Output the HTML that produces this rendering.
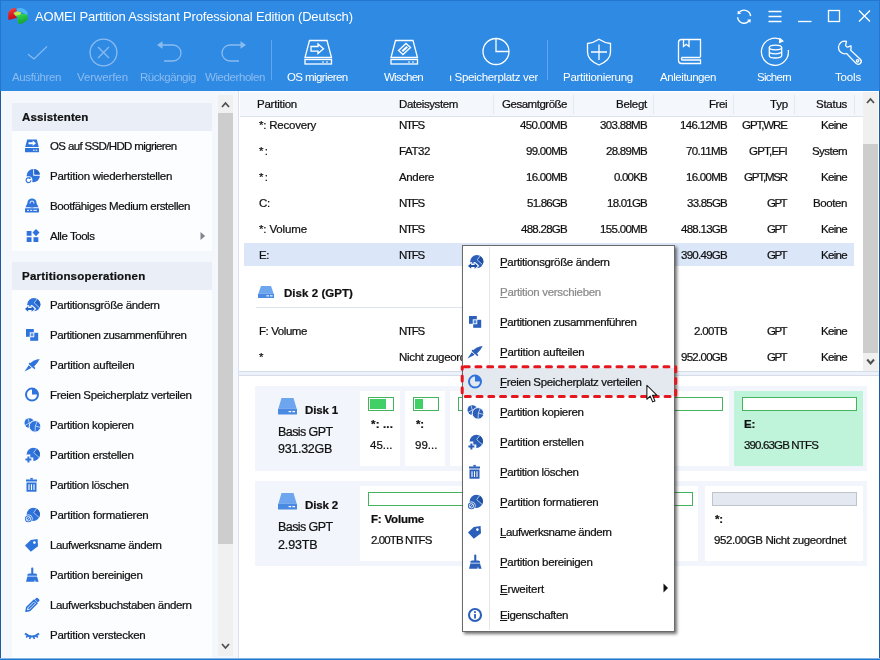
<!DOCTYPE html>
<html lang="de"><head><meta charset="utf-8"><title>AOMEI Partition Assistant Professional Edition (Deutsch)</title>
<style>
*{box-sizing:border-box;margin:0;padding:0}
html,body{width:880px;height:660px;overflow:hidden;background:#fff}
body{position:relative;font-family:"Liberation Sans",sans-serif;font-size:11.5px;letter-spacing:-0.23px;color:#101010}
.a,.t{position:absolute;white-space:nowrap}
.t{line-height:14px;height:14px;will-change:transform;-webkit-text-stroke:0.22px currentColor}
svg{position:absolute;overflow:visible}
u{text-decoration:underline;text-underline-offset:1px}
.blk{position:absolute;background:#fff}
.bar{position:absolute;border:1px solid #45b35c;background:#fff;height:14px}
.bar i{position:absolute;left:1px;top:1px;bottom:1px;background:#40d066}
</style></head><body>
<!-- ===== HEADER ===== -->
<div class="a" style="left:0;top:0;width:880px;height:91px;background:#2f8ae4"></div>
<div class="a" style="left:0;top:0;width:880px;height:1px;background:#2277cf"></div>
<svg style="left:0;top:0" width="880" height="91" viewBox="0 0 880 91" fill="none" stroke-linecap="butt">
<!-- logo -->
<defs><linearGradient id="lr" x1="0" y1="0" x2="0.3" y2="1"><stop offset="0" stop-color="#f4584e"/><stop offset="0.55" stop-color="#e01c22"/><stop offset="1" stop-color="#c80e18"/></linearGradient>
<linearGradient id="lg" x1="0" y1="0" x2="0.4" y2="1"><stop offset="0" stop-color="#34e45c"/><stop offset="1" stop-color="#16a430"/></linearGradient></defs>
<g stroke="none">
<path d="M16.4,8.800 Q23,6.200 27.300,12 L27.700,15.800 L24,13.600 Q21,10.700 17.300,11.400 Z" fill="#4cb6f6"/>
<path d="M8.300,12.200 L11.500,8.400 L15.900,8 L16.700,10.800 L13.300,13 L15.400,15.400 L17.100,17.700 L9,19.900 L8.200,18.500 Z" fill="url(#lr)"/>
<path d="M17.400,17.200 L15.600,15.600 L20,14.600 L24,13.400 L27.700,15.600 L27.600,19.500 Q23,24.600 18,23.500 Z" fill="url(#lg)"/>
<path d="M13.300,13 L17.300,11.300 L21.500,12.200 L20.300,14.800 L15.600,15.700 Z" fill="#c2e648"/>
</g>
<!-- disabled icons -->
<g stroke="#8bbcf0" stroke-width="1.3">
<path d="M28,54.2 L34,59 L47,46.4"/>
<circle cx="103.5" cy="52.5" r="13.4"/><path d="M98,47 L109,58 M109,47 L98,58"/>
<path d="M160,45 H173 a8,8 0 0 1 0,16 H164"/><path d="M162.5,41.2 L157,45 L162.5,48.8Z" fill="#8bbcf0" stroke="none"/>
<path d="M243,45 H230 a8,8 0 0 0 0,16 H239"/><path d="M240.5,41.2 L246,45 L240.5,48.8Z" fill="#8bbcf0" stroke="none"/>
</g>
<g stroke="#fff" stroke-width="1.3">
<!-- OS migrieren -->
<path d="M309.5,40.5 H327 L331.5,57.5 H305Z"/><rect x="305" y="59.5" width="26.5" height="4.5"/><path d="M322,62 h2 M326,62 h2" stroke-width="1"/>
<path d="M311,46.5 h7 v-2.5 l5.5,4.8 -5.5,4.8 v-2.5 h-7z"/>
<!-- Wischen -->
<path d="M395.500,40.5 H413 L417.5,57.500 H391Z"/><rect x="391" y="59.5" width="26.500" height="4.5"/><path d="M408,62 h2 M412,62 h2" stroke-width="1"/>
<path d="M398.500,50.500 L406,43.500 L410.500,47.500 L403,54.500Z"/><path d="M401.500,50.500 L406.500,46 L408,47.500 L403,52Z" fill="#fff" stroke="none"/>
<!-- pie -->
<circle cx="496" cy="51.500" r="13"/><path d="M496,38.500 V51.500 H509"/>
<!-- shield -->
<path d="M599,39.300 C603,42 607,43.200 610.500,43.500 V52 C610.500,58 605,62.500 599,65 C593,62.500 587.500,58 587.500,52 V43.500 C591,43.200 595,42 599,39.300Z"/><path d="M599,44.500 V60 M591,52 H607"/>
<!-- book -->
<path d="M700.500,57 V39.500 H681.500 Q678.500,39.500 678.500,42.500 V60.500 Q678.500,63.500 681.500,63.500 H700.500 V60 H682 Q680.800,59 682,57.500 H700.500"/><path d="M683.500,39.500 V46.500 L686.200,44.300 L689,46.500 V39.500"/>
<!-- backup -->
<path d="M781.500,40 A13.500,13.500 0 1 0 788.300,50"/><path d="M779.500,37.500 L784,41.200 L778.800,43.500Z" fill="#fff" stroke="none"/>
<ellipse cx="775.500" cy="47.500" rx="6.200" ry="2.300"/><path d="M769.300,47.500 V55.700 A6.200,2.300 0 0 0 781.700,55.700 V47.500 M769.300,51.600 A6.200,2.300 0 0 0 781.700,51.600"/>
<!-- wrench -->
<path d="M846.4,41.4 L845.6,45.4 A2.4,2.4 0 0 0 847.6,47.2 L850.9,45.9 A6.3,6.3 0 0 1 850.6,50.2 L860.3,59.2 A3,3 0 0 1 856,63.4 L846.6,53.5 A6.3,6.3 0 1 1 846.4,41.4 Z"/><circle cx="857.600" cy="60.800" r="1.200"/>
<!-- window controls -->
<path d="M739.500,12.100 A6.500,6.500 0 0 1 750.600,16.100 M748.700,21.300 A6.500,6.500 0 0 1 737.600,17.300" stroke-width="1.400"/><path d="M737.400,14.200 L737.900,10.500 L741.100,13.700Z M750.800,19.200 L750.300,22.900 L747.100,19.700Z" fill="#fff" stroke="none"/>
<path d="M768.500,11.500 H781.500 M768.500,16.500 H781.500 M768.500,21.500 H781.500"/>
<path d="M798,21.500 H811.500"/>
<rect x="828.5" y="10.500" width="11" height="11"/>
<path d="M859,10.500 L870,21.500 M870,10.500 L859,21.500"/>
</g>
</svg>

<div class="a" style="left:449.5px;top:70px;width:88.5px;height:14px;overflow:hidden"><div class="t" style="right:0;top:0;color:#fff;letter-spacing:-0.32px;-webkit-text-stroke:0">Freien Speicherplatz ver</div></div>
<div class="t" style="top:10px;left:35px;font-size:13px;letter-spacing:-0.17px;color:#fff;-webkit-text-stroke:0;">AOMEI Partition Assistant Professional Edition (Deutsch)</div>
<div class="t" style="top:70px;left:12px;letter-spacing:-0.38px;color:#8bbcf0;-webkit-text-stroke:0;">Ausführen</div>
<div class="t" style="top:70px;left:77px;letter-spacing:-0.09px;color:#8bbcf0;-webkit-text-stroke:0;">Verwerfen</div>
<div class="t" style="top:70px;left:140px;letter-spacing:-0.47px;color:#8bbcf0;-webkit-text-stroke:0;">Rückgängig</div>
<div class="t" style="top:70px;left:205px;letter-spacing:-0.42px;color:#8bbcf0;-webkit-text-stroke:0;">Wiederholen</div>
<div class="t" style="top:70px;left:287px;letter-spacing:-0.6px;color:#fff;-webkit-text-stroke:0;">OS migrieren</div>
<div class="t" style="top:70px;left:384px;letter-spacing:-0.73px;color:#fff;-webkit-text-stroke:0;">Wischen</div>
<div class="t" style="top:70px;left:562.5px;letter-spacing:-0.28px;color:#fff;-webkit-text-stroke:0;">Partitionierung</div>
<div class="t" style="top:70px;left:660px;letter-spacing:-0.43px;color:#fff;-webkit-text-stroke:0;">Anleitungen</div>
<div class="t" style="top:70px;left:757px;letter-spacing:-0.71px;color:#fff;-webkit-text-stroke:0;">Sichern</div>
<div class="t" style="top:70px;left:835px;letter-spacing:-0.17px;color:#fff;-webkit-text-stroke:0;">Tools</div>
<div class="a" style="left:271px;top:40px;width:1px;height:40px;background:#62a7ee"></div>
<div class="a" style="left:546.5px;top:40px;width:1px;height:40px;background:#62a7ee"></div>

<!-- ===== SIDEBAR ===== -->
<div class="a" style="left:1px;top:91px;width:238px;height:567px;background:#f4f7fc"></div>
<div class="a" style="left:12px;top:103px;width:200px;height:28px;background:#e9eef7"></div>
<div class="a" style="left:12px;top:131px;width:200px;height:120px;background:#fcfdfe"></div>
<div class="a" style="left:12px;top:262px;width:200px;height:28px;background:#e9eef7"></div>
<div class="a" style="left:12px;top:290px;width:200px;height:368px;background:#fcfdfe"></div>
<div class="a" style="left:218px;top:95px;width:15px;height:561px;background:#f0f0f0"></div>
<div class="a" style="left:218px;top:113px;width:15px;height:431px;background:#cdcdcd"></div>
<svg style="left:218px;top:95px" width="15" height="18"><path d="M4,12 L7.5,8 L11,12" fill="none" stroke="#505050" stroke-width="1.8"/></svg>
<svg style="left:218px;top:638px" width="15" height="18"><path d="M4,6 L7.5,10 L11,6" fill="none" stroke="#505050" stroke-width="1.8"/></svg>
<div class="a" style="left:238px;top:91px;width:1px;height:567px;background:#dbe1ec"></div>
<svg style="left:199.5px;top:230px" width="6" height="12"><path d="M0.5,2 L5.2,6 L0.5,10Z" fill="#80868f"/></svg>
<svg style="left:23.5px;top:138px" width="16" height="16" viewBox="0 0 16 16"><path d="M3.2,1.5 H12.8 L14.8,9 H1.2 Z" fill="#2f74dc"/><path d="M4.5,4.3 h4.2 v-1.8 l3.3,2.8 -3.3,2.8 v-1.8 h-4.2z" fill="#fff"/><rect x="1" y="10" width="14" height="4.3" rx=".6" fill="#2f74dc"/><rect x="9" y="11.7" width="1.6" height="1" fill="#fff"/><rect x="11.6" y="11.7" width="1.6" height="1" fill="#fff"/></svg>
<svg style="left:23.5px;top:168px" width="16" height="16" viewBox="0 0 16 16"><circle cx="9.3" cy="7.6" r="6.6" fill="#2f74dc"/><path d="M9.8,1.2 V7.100 H16" stroke="#fff" stroke-width="1.1" fill="none"/><path d="M10.4,0.900 A6.7,6.7 0 0 1 16,6.500 H10.4Z" fill="#2563c4"/><circle cx="4.5" cy="12.2" r="3.9" fill="#fff"/><path d="M6.900,12.300 a2.400,2.400 0 1 1 -1,-2" stroke="#2f74dc" stroke-width="1.2" fill="none"/><path d="M5.300,8.700 l2.100,1.500 -2.300,1z" fill="#2f74dc"/></svg>
<svg style="left:23.5px;top:198px" width="16" height="16" viewBox="0 0 16 16"><circle cx="8" cy="5" r="4.6" fill="#2f74dc"/><circle cx="8" cy="5" r="2" fill="none" stroke="#fff" stroke-width=".9"/><path d="M3.4,5.5 H12.6 L14.6,9.3 H1.4 Z" fill="#2f74dc"/><circle cx="8" cy="5" r="1" fill="#2f74dc"/><rect x="1" y="10.2" width="14" height="4.2" rx=".6" fill="#2f74dc"/><rect x="3" y="11.8" width="2" height="1" fill="#fff"/><rect x="6.2" y="11.8" width="2" height="1" fill="#fff"/><rect x="9.4" y="11.8" width="3.4" height="1" fill="#fff"/></svg>
<svg style="left:23.5px;top:228px" width="16" height="16" viewBox="0 0 16 16"><rect x="2.7" y="3" width="4.8" height="4.8" fill="#2f74dc"/><rect x="2.7" y="9.200" width="4.8" height="4.800" fill="#2f74dc"/><rect x="9.500" y="9.200" width="4.800" height="4.800" fill="#2f74dc"/><path d="M12,1 L15.500,4.600 12,8.200 8.500,4.600Z" fill="#2f74dc"/></svg>
<svg style="left:23.5px;top:297px" width="16" height="16" viewBox="0 0 16 16"><circle cx="9.8" cy="7.6" r="6.6" fill="#2f74dc"/><path d="M10.2,5.9 L13.2,1.9 A6.6,6.6 0 0 1 15.6,10.7Z" fill="#2563c4"/><path d="M13.2,1.9 L10.2,5.9 L15.6,10.7" stroke="#a9c8f3" stroke-width="1" fill="none"/><path d="M1,11.9 l3.2,-2.8 v1.8 h3.4 v-1.8 l3.2,2.8 -3.200,2.8 v-1.8 h-3.4 v1.8z" fill="#2563c4" stroke="#fff" stroke-width="2.2" paint-order="stroke" stroke-linejoin="round"/></svg>
<svg style="left:23.5px;top:327px" width="16" height="16" viewBox="0 0 16 16"><rect x="2" y="2" width="7.8" height="7.8" fill="#2f74dc"/><rect x="6.2" y="5.8" width="8" height="8" fill="#2f74dc"/><rect x="6.2" y="5.8" width="3.6" height="4" fill="#5b95ea" stroke="#fff" stroke-width=".9"/></svg>
<svg style="left:23.5px;top:357px" width="16" height="16" viewBox="0 0 16 16"><path d="M0.5,14.4 L5.6,7 Q9.5,2.6 15.7,2 Q13.6,6.4 9.8,9.8 Z" fill="#2f74dc"/><path d="M5.1,6.1 L10.9,11.6" stroke="#2f74dc" stroke-width="1.6"/><path d="M4.3,7.2 L9.6,12.3" stroke="#fff" stroke-width="1"/></svg>
<svg style="left:23.5px;top:387px" width="16" height="16" viewBox="0 0 16 16"><circle cx="8" cy="7.6" r="6" fill="none" stroke="#2f74dc" stroke-width="2"/><path d="M8,7.6 V1.2 A6.4,6.4 0 0 1 14.4,7.6Z" fill="#2f74dc"/></svg>
<svg style="left:23.5px;top:417px" width="16" height="16" viewBox="0 0 16 16"><circle cx="5.3" cy="6" r="4.8" fill="#2f74dc"/><path d="M5.3,6 L4,1.4 M5.3,6 L1,8.4 M5.3,6 L9.8,4.4" stroke="#fff" stroke-width=".8" opacity=".8"/><circle cx="11" cy="9.4" r="5.8" fill="#2f74dc" stroke="#fff" stroke-width="1"/><path d="M11.4,9 L13.2,4.4 M11.4,9 L16.2,10.4 M11.4,9 L11,14.6" stroke="#fff" stroke-width=".8" opacity=".8"/></svg>
<svg style="left:23.5px;top:447px" width="16" height="16" viewBox="0 0 16 16"><circle cx="9.3" cy="7.3" r="6.6" fill="#2f74dc"/><path d="M9.7,5.6 L12.7,1.6 A6.6,6.6 0 0 1 15.1,10.4Z" fill="#2563c4"/><path d="M12.7,1.6 L9.7,5.6 L15.1,10.4" stroke="#a9c8f3" stroke-width="1" fill="none"/><path d="M4.4,9.4 v6 M1.4,12.4 h6" stroke="#fff" stroke-width="3.8" stroke-linecap="square"/><path d="M4.4,9.4 v6 M1.4,12.4 h6" stroke="#2f74dc" stroke-width="2"/></svg>
<svg style="left:23.5px;top:477px" width="16" height="16" viewBox="0 0 16 16"><rect x="6.4" y="0.9" width="2.4" height="1.8" fill="#2f74dc"/><rect x="2" y="2.5" width="11" height="2" fill="#2f74dc"/><path d="M2.5,5.5 H12.5 V14.7 H2.5Z" fill="#2f74dc"/><path d="M5,7.2 v5.8 M7.5,7.2 v5.8 M10,7.2 v5.8" stroke="#fff" stroke-width="1.1"/></svg>
<svg style="left:23.5px;top:507px" width="16" height="16" viewBox="0 0 16 16"><circle cx="9.3" cy="7.3" r="6.6" fill="#2f74dc"/><path d="M9.7,5.6 L12.7,1.6 A6.6,6.6 0 0 1 15.1,10.4Z" fill="#2563c4"/><path d="M12.7,1.6 L9.7,5.6 L15.1,10.4" stroke="#a9c8f3" stroke-width="1" fill="none"/><circle cx="4.4" cy="11.8" r="4.2" fill="#fff"/><circle cx="4.4" cy="11.8" r="3.5" fill="#2f74dc"/><circle cx="4.4" cy="11.8" r="2.2" fill="none" stroke="#fff" stroke-width=".9" opacity=".9"/><path d="M2.9,13.3 L5.9,10.3" stroke="#fff" stroke-width=".9" opacity=".9"/></svg>
<svg style="left:23.5px;top:537px" width="16" height="16" viewBox="0 0 16 16"><path d="M1,8.4 L6.8,3 L13.6,2 L14,9.3 L6.8,14.7Z" fill="#2f74dc"/><circle cx="10.4" cy="5.6" r="1.3" fill="#fff"/></svg>
<svg style="left:23.5px;top:567px" width="16" height="16" viewBox="0 0 16 16"><rect x="7.2" y="0.6" width="2.1" height="6.6" rx="1" fill="#2f74dc"/><path d="M3.2,8.7 Q3.2,6.6 5.2,6.6 H11.2 Q13.2,6.6 13.2,8.7Z" fill="#2f74dc"/><path d="M3.4,9.6 H13 L14.6,14.7 H11.5 L11,12.5 L10.3,14.7 H2Z" fill="#2f74dc"/></svg>
<svg style="left:23.5px;top:597px" width="16" height="16" viewBox="0 0 16 16"><path d="M2,14.3 L2.8,10.4 L10,3.2 L13,6.2 L5.8,13.4Z" fill="none" stroke="#2f74dc" stroke-width="1.6" stroke-linejoin="round"/><path d="M10.8,2.4 L12.2,1 a1,1 0 0 1 1.4,0 L15.2,2.6 a1,1 0 0 1 0,1.4 L13.8,5.4Z" fill="#2f74dc"/><path d="M4.5,11.7 L10.6,5.6" stroke="#2f74dc" stroke-width="1.6"/></svg>
<svg style="left:23.5px;top:627px" width="16" height="16" viewBox="0 0 16 16"><path d="M1,6.5 Q8,12.5 15,6.5" fill="none" stroke="#2f74dc" stroke-width="2"/><path d="M2.2,10.5 L3.8,8.6 M5.6,12 L6.4,9.8 M10.4,12 L9.6,9.8 M13.8,10.5 L12.2,8.6" stroke="#2f74dc" stroke-width="1.7"/></svg>
<div class="t" style="top:110px;left:22px;letter-spacing:0.12px;font-weight:bold;">Assistenten</div>
<div class="t" style="top:269px;left:22px;letter-spacing:0.22px;font-weight:bold;">Partitionsoperationen</div>
<div class="t" style="top:139px;left:49.5px;letter-spacing:-0.64px;">OS auf SSD/HDD migrieren</div>
<div class="t" style="top:169px;left:49.5px;letter-spacing:-0.27px;">Partition wiederherstellen</div>
<div class="t" style="top:199px;left:49.5px;letter-spacing:-0.41px;">Bootfähiges Medium erstellen</div>
<div class="t" style="top:229px;left:49.5px;letter-spacing:-0.45px;">Alle Tools</div>
<div class="t" style="top:298px;left:49.5px;letter-spacing:-0.34px;">Partitionsgröße ändern</div>
<div class="t" style="top:328px;left:49.5px;letter-spacing:-0.41px;">Partitionen zusammenführen</div>
<div class="t" style="top:358px;left:49.5px;">Partition aufteilen</div>
<div class="t" style="top:388px;left:49.5px;letter-spacing:-0.35px;">Freien Speicherplatz verteilen</div>
<div class="t" style="top:418px;left:49.5px;letter-spacing:-0.33px;">Partition kopieren</div>
<div class="t" style="top:448px;left:49.5px;letter-spacing:-0.28px;">Partition erstellen</div>
<div class="t" style="top:478px;left:49.5px;letter-spacing:-0.38px;">Partition löschen</div>
<div class="t" style="top:508px;left:49.5px;letter-spacing:-0.24px;">Partition formatieren</div>
<div class="t" style="top:538px;left:49.5px;letter-spacing:-0.43px;">Laufwerksname ändern</div>
<div class="t" style="top:568px;left:49.5px;letter-spacing:-0.33px;">Partition bereinigen</div>
<div class="t" style="top:598px;left:49.5px;letter-spacing:-0.36px;">Laufwerksbuchstaben ändern</div>
<div class="t" style="top:628px;left:49.5px;letter-spacing:-0.28px;">Partition verstecken</div>

<!-- ===== TABLE ===== -->
<div class="a" style="left:239px;top:91px;width:640px;height:280px;background:#fff"></div>
<div class="a" style="left:240px;top:92px;width:623px;height:24px;background:#f4f7fc"></div>
<div class="a" style="left:240px;top:116px;width:623px;height:1px;background:#dde2ec"></div>
<div class="a" style="left:493px;top:95px;width:1px;height:19px;background:#e3e7ef"></div>
<div class="a" style="left:573px;top:95px;width:1px;height:19px;background:#e3e7ef"></div>
<div class="a" style="left:653px;top:95px;width:1px;height:19px;background:#e3e7ef"></div>
<div class="a" style="left:733px;top:95px;width:1px;height:19px;background:#e3e7ef"></div>
<div class="a" style="left:794px;top:95px;width:1px;height:19px;background:#e3e7ef"></div>
<div class="a" style="left:854px;top:95px;width:1px;height:19px;background:#e3e7ef"></div>
<div class="a" style="left:244px;top:243px;width:610px;height:23px;background:#dbe7f9"></div>
<div class="a" style="left:256px;top:307px;width:400px;height:1px;background:#dfe3ea"></div>
<svg style="left:258px;top:286px" width="16" height="12" viewBox="0 0 16 12"><path d="M3,0 H13 L15.6,7.6 H0.4Z" fill="#6da5ee"/><rect x="0" y="7.6" width="16" height="4.4" rx=".6" fill="#4a8ae2"/><rect x="8.4" y="9.3" width="2.6" height="1.1" fill="#fff"/><rect x="12" y="9.3" width="2.6" height="1.1" fill="#fff"/></svg>
<!-- table scrollbar -->
<div class="a" style="left:863px;top:92px;width:15px;height:279px;background:#f0f0f0"></div>
<div class="a" style="left:863px;top:144px;width:15px;height:209px;background:#cdcdcd"></div>
<svg style="left:863px;top:92px" width="16" height="18"><path d="M4,11 L7.5,7 L11,11" fill="none" stroke="#505050" stroke-width="1.8"/></svg>
<svg style="left:863px;top:353px" width="16" height="18"><path d="M4.2,6.5 L7.6,10.5 L11,6.500" fill="none" stroke="#505050" stroke-width="2"/></svg>
<div class="t" style="top:97px;left:257px;letter-spacing:-0.24px;">Partition</div>
<div class="t" style="top:97px;left:398.5px;letter-spacing:-0.39px;">Dateisystem</div>
<div class="t" style="top:97px;right:312.78px;letter-spacing:-0.48px;">Gesamtgröße</div>
<div class="t" style="top:97px;right:232.57px;letter-spacing:-0.27px;">Belegt</div>
<div class="t" style="top:97px;right:152.75px;letter-spacing:-0.45px;">Frei</div>
<div class="t" style="top:97px;right:92.48px;letter-spacing:-0.18px;">Typ</div>
<div class="t" style="top:97px;right:32.57px;letter-spacing:-0.27px;">Status</div>
<div class="t" style="top:118px;left:258.5px;letter-spacing:-0.22px;">*: Recovery</div>
<div class="t" style="top:118px;left:398.5px;letter-spacing:-1.26px;">NTFS</div>
<div class="t" style="top:118px;right:312.98px;letter-spacing:-0.68px;">450.00MB</div>
<div class="t" style="top:118px;right:232.98px;letter-spacing:-0.68px;">303.88MB</div>
<div class="t" style="top:118px;right:152.98px;letter-spacing:-0.68px;">146.12MB</div>
<div class="t" style="top:118px;right:93.36px;letter-spacing:-1.06px;">GPT,WRE</div>
<div class="t" style="top:118px;right:32.98px;letter-spacing:-0.68px;">Keine</div>
<div class="t" style="top:144px;left:258.5px;letter-spacing:1.16px;">*:</div>
<div class="t" style="top:144px;left:398.5px;letter-spacing:-0.41px;">FAT32</div>
<div class="t" style="top:144px;right:313.02px;letter-spacing:-0.72px;">99.00MB</div>
<div class="t" style="top:144px;right:233.02px;letter-spacing:-0.72px;">28.89MB</div>
<div class="t" style="top:144px;right:152.90px;letter-spacing:-0.6px;">70.11MB</div>
<div class="t" style="top:144px;right:93.08px;letter-spacing:-0.78px;">GPT,EFI</div>
<div class="t" style="top:144px;right:32.86px;letter-spacing:-0.56px;">System</div>
<div class="t" style="top:170px;left:258.5px;letter-spacing:1.16px;">*:</div>
<div class="t" style="top:170px;left:398.5px;letter-spacing:-0.35px;">Andere</div>
<div class="t" style="top:170px;right:313.02px;letter-spacing:-0.72px;">16.00MB</div>
<div class="t" style="top:170px;right:233.09px;letter-spacing:-0.79px;">0.00KB</div>
<div class="t" style="top:170px;right:153.02px;letter-spacing:-0.72px;">16.00MB</div>
<div class="t" style="top:170px;right:93.46px;letter-spacing:-1.16px;">GPT,MSR</div>
<div class="t" style="top:170px;right:32.98px;letter-spacing:-0.68px;">Keine</div>
<div class="t" style="top:196px;left:258.5px;letter-spacing:-0.25px;">C:</div>
<div class="t" style="top:196px;left:398.5px;letter-spacing:-1.26px;">NTFS</div>
<div class="t" style="top:196px;right:313.07px;letter-spacing:-0.77px;">51.86GB</div>
<div class="t" style="top:196px;right:233.07px;letter-spacing:-0.77px;">18.01GB</div>
<div class="t" style="top:196px;right:153.07px;letter-spacing:-0.77px;">33.85GB</div>
<div class="t" style="top:196px;right:93.85px;letter-spacing:-1.55px;">GPT</div>
<div class="t" style="top:196px;right:32.71px;letter-spacing:-0.41px;">Booten</div>
<div class="t" style="top:222px;left:258.5px;letter-spacing:-0.14px;">*: Volume</div>
<div class="t" style="top:222px;left:398.5px;letter-spacing:-1.26px;">NTFS</div>
<div class="t" style="top:222px;right:313.02px;letter-spacing:-0.72px;">488.28GB</div>
<div class="t" style="top:222px;right:232.98px;letter-spacing:-0.68px;">155.00MB</div>
<div class="t" style="top:222px;right:153.02px;letter-spacing:-0.72px;">488.13GB</div>
<div class="t" style="top:222px;right:93.85px;letter-spacing:-1.55px;">GPT</div>
<div class="t" style="top:222px;right:32.98px;letter-spacing:-0.68px;">Keine</div>
<div class="t" style="top:248px;left:258.5px;letter-spacing:-0.44px;">E:</div>
<div class="t" style="top:248px;left:398.5px;letter-spacing:-1.26px;">NTFS</div>
<div class="t" style="top:248px;right:313.02px;letter-spacing:-0.72px;">390.63GB</div>
<div class="t" style="top:248px;right:232.98px;letter-spacing:-0.68px;">137.20MB</div>
<div class="t" style="top:248px;right:153.02px;letter-spacing:-0.72px;">390.49GB</div>
<div class="t" style="top:248px;right:93.85px;letter-spacing:-1.55px;">GPT</div>
<div class="t" style="top:248px;right:32.98px;letter-spacing:-0.68px;">Keine</div>
<div class="t" style="top:324px;left:258.5px;letter-spacing:-0.42px;">F: Volume</div>
<div class="t" style="top:324px;left:398.5px;letter-spacing:-1.26px;">NTFS</div>
<div class="t" style="top:324px;right:312.98px;letter-spacing:-0.68px;">2.00TB</div>
<div class="t" style="top:324px;right:233.02px;letter-spacing:-0.72px;">92.00MB</div>
<div class="t" style="top:324px;right:152.98px;letter-spacing:-0.68px;">2.00TB</div>
<div class="t" style="top:324px;right:93.85px;letter-spacing:-1.55px;">GPT</div>
<div class="t" style="top:324px;right:32.98px;letter-spacing:-0.68px;">Keine</div>
<div class="t" style="top:350px;left:258.5px;letter-spacing:1.52px;">*</div>
<div class="t" style="top:350px;left:398.5px;letter-spacing:-0.31px;">Nicht zugeordnet</div>
<div class="t" style="top:350px;right:313.02px;letter-spacing:-0.72px;">952.00GB</div>
<div class="t" style="top:350px;right:233.09px;letter-spacing:-0.79px;">0.00KB</div>
<div class="t" style="top:350px;right:153.02px;letter-spacing:-0.72px;">952.00GB</div>
<div class="t" style="top:350px;right:93.85px;letter-spacing:-1.55px;">GPT</div>
<div class="t" style="top:350px;right:32.98px;letter-spacing:-0.68px;">Keine</div>
<div class="t" style="top:286px;left:284px;letter-spacing:0.05px;font-weight:bold;">Disk 2 (GPT)</div>
<!-- splitter -->
<div class="a" style="left:239px;top:371px;width:640px;height:5px;background:#edf1f9;border-top:1px solid #d5dcea;border-bottom:1px solid #d5dcea"></div>

<!-- ===== DISK PANEL ===== -->
<div class="a" style="left:255px;top:386px;width:612px;height:85px;background:#f2f5fb"></div>
<div class="a" style="left:255px;top:481px;width:612px;height:85px;background:#f2f5fb"></div>
<svg style="left:278px;top:398px" width="19" height="17" viewBox="0 0 19 17"><path d="M3.5,0 H15.5 L18.6,10.6 H0.4Z" fill="#6da5ee"/><rect x="0" y="10.6" width="19" height="6" rx=".7" fill="#4a8ae2"/><rect x="10.6" y="13" width="2.6" height="1.2" fill="#fff"/><rect x="14.4" y="13" width="2.6" height="1.2" fill="#fff"/></svg>
<svg style="left:278px;top:493px" width="19" height="17" viewBox="0 0 19 17"><path d="M3.5,0 H15.5 L18.6,10.6 H0.4Z" fill="#6da5ee"/><rect x="0" y="10.6" width="19" height="6" rx=".7" fill="#4a8ae2"/><rect x="10.6" y="13" width="2.6" height="1.2" fill="#fff"/><rect x="14.4" y="13" width="2.6" height="1.2" fill="#fff"/></svg>
<!-- disk1 partitions -->
<div class="blk" style="left:360px;top:391px;width:40px;height:75px"></div>
<div class="blk" style="left:405px;top:391px;width:40px;height:75px"></div>
<div class="blk" style="left:450px;top:391px;width:279px;height:75px"></div>
<div class="blk" style="left:734px;top:391px;width:129px;height:75px;background:#bff4da"></div>
<div class="bar" style="left:368px;top:397px;width:26px"><i style="width:16px"></i></div>
<div class="bar" style="left:413px;top:397px;width:26px"><i style="width:8px"></i></div>
<div class="bar" style="left:458px;top:397px;width:265px"></div>
<div class="bar" style="left:742px;top:397px;width:115px"></div>
<!-- disk2 partitions -->
<div class="blk" style="left:360px;top:486px;width:338px;height:75px"></div>
<div class="blk" style="left:705px;top:486px;width:158px;height:75px"></div>
<div class="bar" style="left:368px;top:492px;width:325px"></div>
<div class="bar" style="left:712px;top:492px;width:145px;background:#e4e8f0;border-color:#bfc4cc"></div>
<div class="t" style="top:403px;left:305px;letter-spacing:-0.15px;font-weight:bold;">Disk 1</div>
<div class="t" style="top:425px;left:278px;font-size:12.5px;letter-spacing:-0.58px;">Basis GPT</div>
<div class="t" style="top:442px;left:278px;font-size:12.5px;letter-spacing:-0.29px;">931.32GB</div>
<div class="t" style="top:498px;left:305px;letter-spacing:-0.15px;font-weight:bold;">Disk 2</div>
<div class="t" style="top:520px;left:278px;font-size:12.5px;letter-spacing:-0.58px;">Basis GPT</div>
<div class="t" style="top:538px;left:278px;font-size:12.5px;letter-spacing:-0.14px;">2.93TB</div>
<div class="t" style="top:417px;left:370.5px;letter-spacing:0.15px;font-weight:bold;">*: ...</div>
<div class="t" style="top:438px;left:370px;letter-spacing:0.02px;">45...</div>
<div class="t" style="top:417px;left:416px;font-weight:bold;">*:</div>
<div class="t" style="top:438px;left:415px;letter-spacing:0.02px;">99...</div>
<div class="t" style="top:417px;left:744px;font-weight:bold;">E:</div>
<div class="t" style="top:438px;left:744px;letter-spacing:-0.85px;">390.63GB NTFS</div>
<div class="t" style="top:512px;left:370.5px;letter-spacing:-0.19px;font-weight:bold;">F: Volume</div>
<div class="t" style="top:533px;left:370.5px;letter-spacing:-0.89px;">2.00TB NTFS</div>
<div class="t" style="top:512px;left:715px;font-weight:bold;">*:</div>
<div class="t" style="top:533px;left:714px;letter-spacing:-0.4px;">952.00GB Nicht zugeordnet</div>

<!-- ===== CONTEXT MENU ===== -->
<div class="a" style="left:462px;top:245px;width:213px;height:387px;background:#fff;border:1px solid #6a6a6a;box-shadow:2px 2px 3px rgba(0,0,0,.55)"></div>
<div class="a" style="left:489px;top:247px;width:1px;height:383px;background:#e6e6e6"></div>
<div class="a" style="left:463px;top:368px;width:211px;height:28px;background:#e4e8ef"></div>
<svg style="left:467px;top:254px" width="16" height="16" viewBox="0 0 16 16"><circle cx="9.8" cy="7.6" r="6.6" fill="#2b5fba"/><path d="M10.2,5.9 L13.2,1.9 A6.6,6.6 0 0 1 15.6,10.7Z" fill="#1f4f9f"/><path d="M13.2,1.9 L10.2,5.9 L15.6,10.7" stroke="#a9c8f3" stroke-width="1" fill="none"/><path d="M1,11.9 l3.2,-2.8 v1.8 h3.4 v-1.8 l3.2,2.8 -3.200,2.8 v-1.8 h-3.4 v1.8z" fill="#1f4f9f" stroke="#fff" stroke-width="2.2" paint-order="stroke" stroke-linejoin="round"/></svg>
<svg style="left:467px;top:314px" width="16" height="16" viewBox="0 0 16 16"><rect x="2" y="2" width="7.8" height="7.8" fill="#2b5fba"/><rect x="6.2" y="5.8" width="8" height="8" fill="#2b5fba"/><rect x="6.2" y="5.8" width="3.6" height="4" fill="#4f86dd" stroke="#fff" stroke-width=".9"/></svg>
<svg style="left:467px;top:344px" width="16" height="16" viewBox="0 0 16 16"><path d="M0.5,14.4 L5.6,7 Q9.5,2.6 15.7,2 Q13.6,6.4 9.8,9.8 Z" fill="#2b5fba"/><path d="M5.1,6.1 L10.9,11.6" stroke="#2b5fba" stroke-width="1.6"/><path d="M4.3,7.2 L9.6,12.3" stroke="#fff" stroke-width="1"/></svg>
<svg style="left:467px;top:374px" width="16" height="16" viewBox="0 0 16 16"><circle cx="8" cy="7.6" r="6" fill="none" stroke="#2f74dc" stroke-width="2"/><path d="M8,7.6 V1.2 A6.4,6.4 0 0 1 14.4,7.6Z" fill="#2f74dc"/></svg>
<svg style="left:467px;top:404px" width="16" height="16" viewBox="0 0 16 16"><circle cx="5.3" cy="6" r="4.8" fill="#2b5fba"/><path d="M5.3,6 L4,1.4 M5.3,6 L1,8.4 M5.3,6 L9.8,4.4" stroke="#fff" stroke-width=".8" opacity=".8"/><circle cx="11" cy="9.4" r="5.8" fill="#2b5fba" stroke="#fff" stroke-width="1"/><path d="M11.4,9 L13.2,4.4 M11.4,9 L16.2,10.4 M11.4,9 L11,14.6" stroke="#fff" stroke-width=".8" opacity=".8"/></svg>
<svg style="left:467px;top:434px" width="16" height="16" viewBox="0 0 16 16"><circle cx="9.3" cy="7.3" r="6.6" fill="#2b5fba"/><path d="M9.7,5.6 L12.7,1.6 A6.6,6.6 0 0 1 15.1,10.4Z" fill="#1f4f9f"/><path d="M12.7,1.6 L9.7,5.6 L15.1,10.4" stroke="#a9c8f3" stroke-width="1" fill="none"/><path d="M4.4,9.4 v6 M1.4,12.4 h6" stroke="#fff" stroke-width="3.8" stroke-linecap="square"/><path d="M4.4,9.4 v6 M1.4,12.4 h6" stroke="#2b5fba" stroke-width="2"/></svg>
<svg style="left:467px;top:464px" width="16" height="16" viewBox="0 0 16 16"><rect x="6.4" y="0.9" width="2.4" height="1.8" fill="#2b5fba"/><rect x="2" y="2.5" width="11" height="2" fill="#2b5fba"/><path d="M2.5,5.5 H12.5 V14.7 H2.5Z" fill="#2b5fba"/><path d="M5,7.2 v5.8 M7.5,7.2 v5.8 M10,7.2 v5.8" stroke="#fff" stroke-width="1.1"/></svg>
<svg style="left:467px;top:494px" width="16" height="16" viewBox="0 0 16 16"><circle cx="9.3" cy="7.3" r="6.6" fill="#2b5fba"/><path d="M9.7,5.6 L12.7,1.6 A6.6,6.6 0 0 1 15.1,10.4Z" fill="#1f4f9f"/><path d="M12.7,1.6 L9.7,5.6 L15.1,10.4" stroke="#a9c8f3" stroke-width="1" fill="none"/><circle cx="4.4" cy="11.8" r="4.2" fill="#fff"/><circle cx="4.4" cy="11.8" r="3.5" fill="#2b5fba"/><circle cx="4.4" cy="11.8" r="2.2" fill="none" stroke="#fff" stroke-width=".9" opacity=".9"/><path d="M2.9,13.3 L5.9,10.3" stroke="#fff" stroke-width=".9" opacity=".9"/></svg>
<svg style="left:467px;top:524px" width="16" height="16" viewBox="0 0 16 16"><path d="M1,8.4 L6.8,3 L13.6,2 L14,9.3 L6.8,14.7Z" fill="#2b5fba"/><circle cx="10.4" cy="5.6" r="1.3" fill="#fff"/></svg>
<svg style="left:467px;top:554px" width="16" height="16" viewBox="0 0 16 16"><rect x="7.2" y="0.6" width="2.1" height="6.6" rx="1" fill="#2b5fba"/><path d="M3.2,8.7 Q3.2,6.6 5.2,6.6 H11.2 Q13.2,6.6 13.2,8.7Z" fill="#2b5fba"/><path d="M3.4,9.6 H13 L14.6,14.7 H11.5 L11,12.5 L10.3,14.7 H2Z" fill="#2b5fba"/></svg>
<svg style="left:467px;top:607px" width="16" height="16" viewBox="0 0 16 16"><circle cx="8" cy="8" r="6" fill="none" stroke="#2b5fba" stroke-width="2.1"/><rect x="7.1" y="7" width="1.8" height="4.5" fill="#2b5fba"/><rect x="7.1" y="4.2" width="1.8" height="1.8" fill="#2b5fba"/></svg>
<div class="t" style="top:255px;left:499.5px;letter-spacing:-0.34px;"><u>P</u>artitionsgröße ändern</div>
<div class="t" style="top:285px;left:499.5px;letter-spacing:-0.31px;color:#8a8a8a;"><u>P</u>artition verschieben</div>
<div class="t" style="top:315px;left:499.5px;letter-spacing:-0.41px;"><u>P</u>artitionen zusammenführen</div>
<div class="t" style="top:345px;left:499.5px;"><u>P</u>artition aufteilen</div>
<div class="t" style="top:375px;left:499.5px;letter-spacing:-0.35px;"><u>F</u>reien Speicherplatz verteilen</div>
<div class="t" style="top:405px;left:499.5px;letter-spacing:-0.33px;"><u>P</u>artition kopieren</div>
<div class="t" style="top:435px;left:499.5px;letter-spacing:-0.28px;"><u>P</u>artition erstellen</div>
<div class="t" style="top:465px;left:499.5px;letter-spacing:-0.38px;"><u>P</u>artition löschen</div>
<div class="t" style="top:495px;left:499.5px;letter-spacing:-0.24px;"><u>P</u>artition formatieren</div>
<div class="t" style="top:525px;left:499.5px;letter-spacing:-0.43px;"><u>L</u>aufwerksname ändern</div>
<div class="t" style="top:555px;left:499.5px;letter-spacing:-0.33px;"><u>P</u>artition bereinigen</div>
<div class="t" style="top:582px;left:499.5px;letter-spacing:-0.15px;"><u>E</u>rweitert</div>
<div class="t" style="top:608px;left:499.5px;letter-spacing:-0.38px;"><u>E</u>igenschaften</div>
<svg style="left:663px;top:582.5px" width="6" height="10"><path d="M0.5,0.5 L5,5 L0.5,9.5Z" fill="#111"/></svg>
<svg style="left:0;top:0" width="880" height="660"><rect x="462.2" y="366.8" width="213.5" height="29.6" fill="none" stroke="#e6161e" stroke-width="3" stroke-linecap="round" stroke-dasharray="5 6.75" stroke-dashoffset="-2"/></svg>
<!-- cursor -->
<svg style="left:646px;top:383.5px" width="14" height="20" viewBox="0 0 16 22"><path d="M1,1 V17 L4.8,13.4 L7.6,20 L10.2,18.9 L7.4,12.5 H12.6Z" fill="#fff" stroke="#111" stroke-width="1.2" stroke-linejoin="round"/></svg>

<!-- window borders -->
<div class="a" style="left:0;top:0;width:1px;height:91px;background:#2576cf"></div>
<div class="a" style="left:0;top:91px;width:1px;height:569px;background:#1d5b9e"></div>
<div class="a" style="left:878.5px;top:0;width:1.5px;height:91px;background:#2576cf"></div>
<div class="a" style="left:878.5px;top:91px;width:1.5px;height:569px;background:#1d5b9e"></div>
<div class="a" style="left:0;top:658px;width:880px;height:1px;background:#7fb6ea"></div>
<div class="a" style="left:0;top:659px;width:880px;height:1px;background:#2176cb"></div>
</body></html>
